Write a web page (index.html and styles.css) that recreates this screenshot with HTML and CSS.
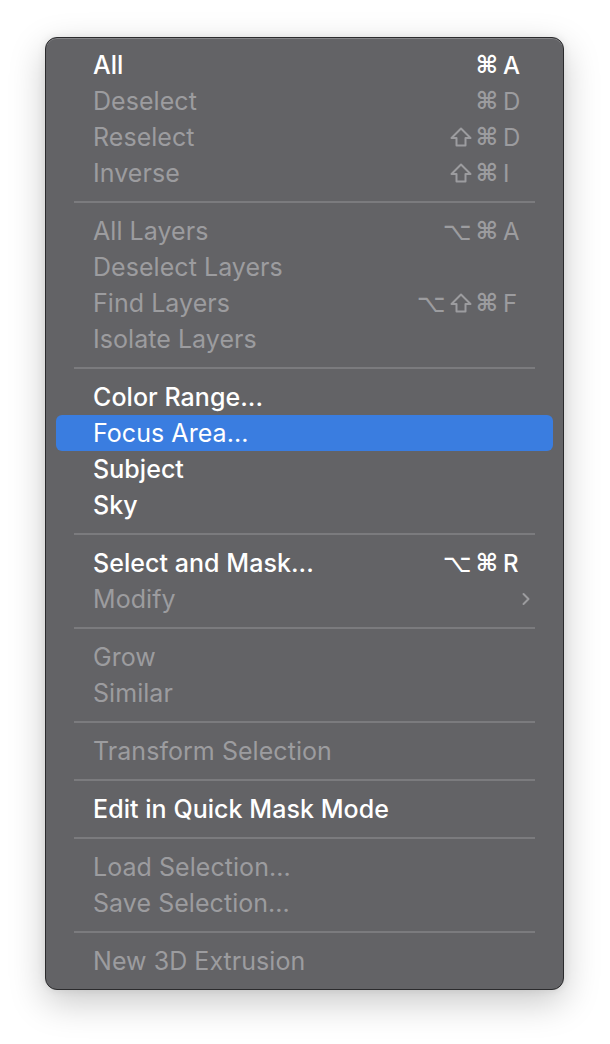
FILE: index.html
```html
<!DOCTYPE html>
<html lang="en">
<head>
<meta charset="utf-8">
<title>Select menu</title>
<link rel="stylesheet" href="styles.css">
</head>
<body>
<div class="menu">
  <div class="item on"><span class="label">All</span><span class="sc"><span class="mod">⌘</span><span class="key">A</span></span></div>
  <div class="item"><span class="label">Deselect</span><span class="sc"><span class="mod">⌘</span><span class="key">D</span></span></div>
  <div class="item"><span class="label">Reselect</span><span class="sc"><svg class="shift" width="22" height="20" viewBox="0 0 22 20" aria-label="Shift"><path d="M11 1.5 L20.5 11 L15.5 11 L15.5 18.5 L6.5 18.5 L6.5 11 L1.5 11 Z" fill="none" stroke="currentColor" stroke-width="2" stroke-linejoin="round"/></svg><span class="mod">⌘</span><span class="key">D</span></span></div>
  <div class="item"><span class="label">Inverse</span><span class="sc"><svg class="shift" width="22" height="20" viewBox="0 0 22 20" aria-label="Shift"><path d="M11 1.5 L20.5 11 L15.5 11 L15.5 18.5 L6.5 18.5 L6.5 11 L1.5 11 Z" fill="none" stroke="currentColor" stroke-width="2" stroke-linejoin="round"/></svg><span class="mod">⌘</span><span class="key">I</span></span></div>
  <div class="sep"></div>
  <div class="item"><span class="label">All Layers</span><span class="sc"><span class="mod opt">⌥</span><span class="mod">⌘</span><span class="key">A</span></span></div>
  <div class="item"><span class="label">Deselect Layers</span></div>
  <div class="item"><span class="label">Find Layers</span><span class="sc"><span class="mod opt">⌥</span><svg class="shift" width="22" height="20" viewBox="0 0 22 20" aria-label="Shift"><path d="M11 1.5 L20.5 11 L15.5 11 L15.5 18.5 L6.5 18.5 L6.5 11 L1.5 11 Z" fill="none" stroke="currentColor" stroke-width="2" stroke-linejoin="round"/></svg><span class="mod">⌘</span><span class="key">F</span></span></div>
  <div class="item"><span class="label">Isolate Layers</span></div>
  <div class="sep"></div>
  <div class="item on"><span class="label">Color Range...</span></div>
  <div class="item on hl"><span class="label">Focus Area...</span></div>
  <div class="item on"><span class="label">Subject</span></div>
  <div class="item on"><span class="label">Sky</span></div>
  <div class="sep"></div>
  <div class="item on"><span class="label">Select and Mask...</span><span class="sc"><span class="mod opt">⌥</span><span class="mod">⌘</span><span class="key">R</span></span></div>
  <div class="item"><span class="label">Modify</span><span class="sc"><svg class="chev" width="10" height="16" viewBox="0 0 10 16"><path d="M2.5 3 L7.5 8 L2.5 13" fill="none" stroke="currentColor" stroke-width="2" stroke-linecap="round" stroke-linejoin="round"/></svg></span></div>
  <div class="sep"></div>
  <div class="item"><span class="label">Grow</span></div>
  <div class="item"><span class="label">Similar</span></div>
  <div class="sep"></div>
  <div class="item"><span class="label">Transform Selection</span></div>
  <div class="sep"></div>
  <div class="item on"><span class="label">Edit in Quick Mask Mode</span></div>
  <div class="sep"></div>
  <div class="item"><span class="label">Load Selection...</span></div>
  <div class="item"><span class="label">Save Selection...</span></div>
  <div class="sep"></div>
  <div class="item"><span class="label">New 3D Extrusion</span></div>
</div>
</body>
</html>
```

FILE: styles.css
```css
html, body {
  margin: 0;
  padding: 0;
  background: #ffffff;
}
body {
  width: 610px;
  height: 1044px;
  overflow: hidden;
  font-family: Inter, "Liberation Sans", sans-serif;
}
.menu {
  margin: 37px 0 0 45px;
  width: 517px;
  padding: 9px 0 10px;
  background: #636366;
  border: 1px solid #2b2b2d;
  border-radius: 12px;
  box-shadow: inset 0 1px 0 #858588, 0 12px 36px rgba(0, 0, 0, 0.22), 0 0 8px rgba(0, 0, 0, 0.08);
}
.item {
  height: 36px;
  margin: 0 10px;
  padding: 0 30px 0 37px;
  border-radius: 6px;
  display: flex;
  align-items: center;
  justify-content: space-between;
  color: #9c9c9f;
  font-size: 25px;
  font-weight: 400;
  letter-spacing: 0.05px;
}
.item.on {
  color: #ffffff;
  font-weight: 500;
}
.item.hl {
  background: #3a7de0;
  font-weight: 400;
}
.sc {
  display: flex;
  align-items: center;
  gap: 4px;
}
.mod {
  font-family: "DejaVu Sans", sans-serif;
  font-size: 24px;
  font-weight: 700;
  line-height: 1;
}
.mod.opt {
  font-weight: 400;
  font-size: 25px;
}
.shift {
  display: block;
}
.key {
  width: 20px;
  margin-left: 1px;
  text-align: left;
  font-size: 24px;
}
.chev {
  display: block;
  margin-right: -8px;
}
.sep {
  height: 2px;
  margin: 10px 28px;
  background: #7b7b7e;
}
```
